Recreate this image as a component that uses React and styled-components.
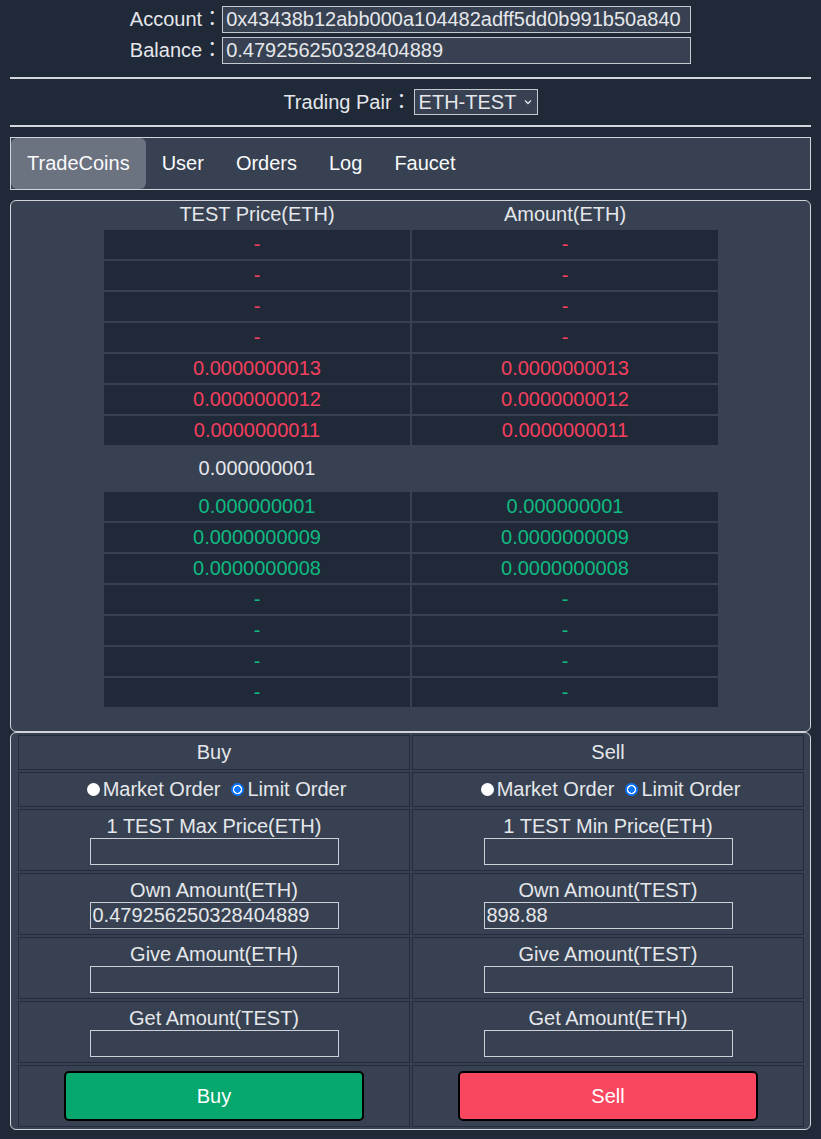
import React from "react";
import styled, { createGlobalStyle } from "styled-components";

const GlobalStyle = createGlobalStyle`
  html, body {
    margin: 0;
    padding: 0;
    background: #1f2937;
  }
  body {
    font-family: "Liberation Sans", Arial, "Noto Sans CJK JP", sans-serif;
    font-size: 20px;
    color: #e5e7eb;
  }
  * { box-sizing: border-box; }
`;

const Page = styled.div`
  padding: 6px 10px 8px;
`;

const AccountBlock = styled.div`
  display: flex;
  flex-direction: column;
  align-items: center;
  gap: 4px;
`;

const FieldRow = styled.div`
  display: flex;
  align-items: center;
  height: 27px;
`;

const FieldLabel = styled.span`
  line-height: 27px;
  white-space: nowrap;
`;

const WideInput = styled.input`
  width: 469px;
  height: 27px;
  padding: 0 3px;
  border: 1px solid #c4c9d0;
  background: #374151;
  color: #e5e7eb;
  font: inherit;
  outline: none;
`;

const Rule = styled.div`
  height: 2px;
  background: #d3d6db;
  margin-top: ${(p) => p.$top}px;
`;

const PairRow = styled.div`
  display: flex;
  justify-content: center;
  align-items: center;
  margin-top: 10px;
  height: 26px;
`;

const SelectWrap = styled.div`
  position: relative;
  display: inline-flex;
  margin-left: 2px;
`;

const PairSelect = styled.select`
  appearance: none;
  -webkit-appearance: none;
  width: 124px;
  height: 26px;
  padding: 0 0 0 4px;
  border: 1px solid #c4c9d0;
  border-radius: 0;
  background: #374151;
  color: #e5e7eb;
  font: inherit;
  outline: none;
`;

const Chevron = styled.svg`
  position: absolute;
  right: 6px;
  top: 10px;
  pointer-events: none;
`;

const TabBar = styled.nav`
  margin-top: 10px;
  height: 53px;
  display: flex;
  border: 1px solid #d1d5db;
  background: #374151;
`;

const Tab = styled.div`
  display: flex;
  align-items: center;
  padding: 0 16px;
  border-radius: 6px;
  color: #f9fafb;
  background: ${(p) => (p.$active ? "#6b7280" : "transparent")};
`;

const BookPanel = styled.section`
  margin-top: 10px;
  border: 1px solid #d1d5db;
  border-radius: 6px;
  background: #374151;
  padding: 0 0 24px;
  display: flex;
  justify-content: center;
`;

const BookGrid = styled.div`
  display: grid;
  grid-template-columns: 306px 306px;
  gap: 2px;
  margin-left: 1px;
`;

const BookHead = styled.div`
  height: 27px;
  display: flex;
  align-items: center;
  justify-content: center;
  color: #e5e7eb;
`;

const BookCell = styled.div`
  height: 29px;
  display: flex;
  align-items: center;
  justify-content: center;
  background: #1f2937;
  color: ${(p) => (p.$side === "sell" ? "#f43f5e" : "#10b981")};
`;

const MidPrice = styled.div`
  height: 43px;
  display: flex;
  align-items: center;
  justify-content: center;
  color: #e5e7eb;
`;

const FormPanel = styled.section`
  border: 1px solid #d1d5db;
  border-radius: 6px;
  background: #374151;
  padding: 2px 6px 2px 7px;
`;

const FormGrid = styled.div`
  display: grid;
  grid-template-columns: 1fr 1fr;
  gap: 2px;
`;

const Cell = styled.div`
  border: 1px solid #242c39;
  height: ${(p) => (p.$short ? 35 : 62)}px;
  display: flex;
  flex-direction: column;
  align-items: center;
  justify-content: ${(p) => (p.$short || p.$center ? "center" : "flex-start")};
  padding-top: ${(p) => (p.$short || p.$center ? 0 : 5)}px;
`;

const CellLabel = styled.div`
  line-height: 23px;
`;

const RadioGroup = styled.div`
  display: flex;
  align-items: center;
`;

const RadioLabel = styled.label`
  display: flex;
  align-items: center;
  margin-left: ${(p) => (p.$first ? 0 : 6)}px;
`;

const Radio = styled.input`
  appearance: none;
  -webkit-appearance: none;
  width: 13px;
  height: 13px;
  margin: 0 3px 0 5px;
  border-radius: 50%;
  background: #ffffff;
  &:checked {
    background: radial-gradient(circle, #0a75ff 0 3px, #ffffff 3.5px 4.3px, #0a75ff 4.8px);
  }
`;

const AmountInput = styled.input`
  width: 249px;
  height: 27px;
  padding: 0 2px;
  border: 1px solid #cdd1d7;
  background: transparent;
  color: #e5e7eb;
  font: inherit;
  outline: none;
`;

const ActionButton = styled.button`
  width: 300px;
  height: 50px;
  border: 2px solid #000;
  border-radius: 5px;
  background: ${(p) => (p.$kind === "buy" ? "#06a86e" : "#f8475f")};
  color: #ffffff;
  font: inherit;
  cursor: pointer;
`;

const sellRows = ["-", "-", "-", "-", "0.0000000013", "0.0000000012", "0.0000000011"];
const buyRows = ["0.000000001", "0.0000000009", "0.0000000008", "-", "-", "-", "-"];

const fields = [
  ["1 TEST Max Price(ETH)", "", "1 TEST Min Price(ETH)", ""],
  ["Own Amount(ETH)", "0.479256250328404889", "Own Amount(TEST)", "898.88"],
  ["Give Amount(ETH)", "", "Give Amount(TEST)", ""],
  ["Get Amount(TEST)", "", "Get Amount(ETH)", ""],
];

function OrderTypes({ name }) {
  return (
    <RadioGroup>
      <RadioLabel $first>
        <Radio type="radio" name={name} />
        Market Order
      </RadioLabel>
      <RadioLabel>
        <Radio type="radio" name={name} defaultChecked />
        Limit Order
      </RadioLabel>
    </RadioGroup>
  );
}

export default function App() {
  return (
    <>
      <GlobalStyle />
      <Page>
        <AccountBlock>
          <FieldRow>
            <FieldLabel>Account：</FieldLabel>
            <WideInput readOnly value="0x43438b12abb000a104482adff5dd0b991b50a840" />
          </FieldRow>
          <FieldRow>
            <FieldLabel>Balance：</FieldLabel>
            <WideInput readOnly value="0.479256250328404889" />
          </FieldRow>
        </AccountBlock>

        <Rule $top={13} />

        <PairRow>
          <FieldLabel>Trading Pair：</FieldLabel>
          <SelectWrap>
            <PairSelect defaultValue="ETH-TEST">
              <option>ETH-TEST</option>
            </PairSelect>
            <Chevron width="8" height="6" viewBox="0 0 8 6">
              <path d="M1 1.5 L4 4.5 L7 1.5" fill="none" stroke="#e5e7eb" strokeWidth="1.3" />
            </Chevron>
          </SelectWrap>
        </PairRow>

        <Rule $top={10} />

        <TabBar>
          <Tab $active>TradeCoins</Tab>
          <Tab>User</Tab>
          <Tab>Orders</Tab>
          <Tab>Log</Tab>
          <Tab>Faucet</Tab>
        </TabBar>

        <BookPanel>
          <BookGrid>
            <BookHead>TEST Price(ETH)</BookHead>
            <BookHead>Amount(ETH)</BookHead>
            {sellRows.map((v, i) => (
              <React.Fragment key={"s" + i}>
                <BookCell $side="sell">{v}</BookCell>
                <BookCell $side="sell">{v}</BookCell>
              </React.Fragment>
            ))}
            <MidPrice>0.000000001</MidPrice>
            <MidPrice />
            {buyRows.map((v, i) => (
              <React.Fragment key={"b" + i}>
                <BookCell $side="buy">{v}</BookCell>
                <BookCell $side="buy">{v}</BookCell>
              </React.Fragment>
            ))}
          </BookGrid>
        </BookPanel>

        <FormPanel>
          <FormGrid>
            <Cell $short>Buy</Cell>
            <Cell $short>Sell</Cell>
            <Cell $short>
              <OrderTypes name="buyType" />
            </Cell>
            <Cell $short>
              <OrderTypes name="sellType" />
            </Cell>
            {fields.map(([l1, v1, l2, v2]) => (
              <React.Fragment key={l1}>
                <Cell>
                  <CellLabel>{l1}</CellLabel>
                  <AmountInput readOnly value={v1} />
                </Cell>
                <Cell>
                  <CellLabel>{l2}</CellLabel>
                  <AmountInput readOnly value={v2} />
                </Cell>
              </React.Fragment>
            ))}
            <Cell $center>
              <ActionButton $kind="buy">Buy</ActionButton>
            </Cell>
            <Cell $center>
              <ActionButton $kind="sell">Sell</ActionButton>
            </Cell>
          </FormGrid>
        </FormPanel>
      </Page>
    </>
  );
}
